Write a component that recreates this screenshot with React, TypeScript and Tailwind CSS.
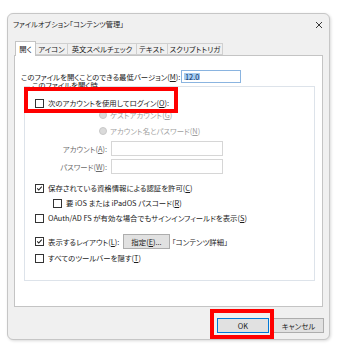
import type { ReactNode } from "react";

// File options dialog (Windows style): tab strip, "open" tab with a login group box,
// and two red call-out frames drawn over the screenshot.

function Check({ checked }: { checked?: boolean }) {
  return (
    <span className="flex h-[9px] w-[9px] shrink-0 items-center justify-center border border-[#333] bg-white">
      {checked && (
        <svg viewBox="0 0 9 9" className="h-[9px] w-[9px]">
          <path d="M1.6 4.4 L3.5 6.4 L7.4 2.2" fill="none" stroke="#1a1a1a" strokeWidth="1.3" />
        </svg>
      )}
    </span>
  );
}

function Radio() {
  return <span className="h-[8px] w-[8px] shrink-0 rounded-full border border-[#c8c8c8] bg-[#dadada]" />;
}

function Key({ k }: { k: string }) {
  return (
    <>
      (<u>{k}</u>)
    </>
  );
}

function CheckRow({ checked, indent, children, className }: { checked?: boolean; indent?: boolean; children: ReactNode; className: string }) {
  return (
    <div className={`flex h-[12px] items-center gap-[4px] ${indent ? "pl-[28px]" : "pl-[10px]"} ${className}`}>
      <Check checked={checked} />
      <span className="whitespace-nowrap">{children}</span>
    </div>
  );
}

const TABS = [
  { label: "開く", w: "w-[21px]" },
  { label: "アイコン", w: "w-[32px]" },
  { label: "英文スペルチェック", w: "w-[69px]" },
  { label: "テキスト", w: "w-[31px]" },
  { label: "スクリプトトリガ", w: "w-[55px]" },
];

export default function App() {
  return (
    <div className="relative h-[345px] w-[338px] overflow-hidden bg-white pl-[7px] pt-[13px] font-['Noto_Sans_CJK_JP',sans-serif] text-[7.4px] leading-none text-[#1a1a1a] [font-feature-settings:'palt']">
      <div className="flex h-[327px] w-[323px] flex-col rounded-[6px] border border-[#c6c6c6] bg-[#f0f0f0] shadow-[1px_1px_3px_rgba(0,0,0,0.15)]">
        <div className="flex h-[21px] items-center justify-between pl-[5px] pr-[7px]">
          <span className="text-[7.2px]">ファイルオプション「コンテンツ管理」</span>
          <svg viewBox="0 0 6 6" className="h-[6px] w-[6px]">
            <path d="M0 0 L6 6 M6 0 L0 6" stroke="#222" strokeWidth="0.9" />
          </svg>
        </div>

        <div className="mt-[6px] flex h-[14px] items-end pl-[7px]">
          {TABS.map((tab, i) =>
            i === 0 ? (
              <div
                key={tab.label}
                className={`relative z-10 -mb-px flex h-[15px] ${tab.w} items-center justify-center border border-b-0 border-[#c4c4c4] bg-white pb-[1px]`}
              >
                {tab.label}
              </div>
            ) : (
              <div
                key={tab.label}
                className={`flex h-[12px] ${tab.w} items-center justify-center whitespace-nowrap border-y border-r border-[#d0d0d0] bg-[#f0f0f0]`}
              >
                {tab.label}
              </div>
            ),
          )}
        </div>

        <div className="ml-[6px] flex h-[252px] w-[309px] flex-col border border-[#c4c4c4] bg-white">
          <div className="mt-[14px] flex h-[13px] items-center pl-[6px]">
            <span className="w-[160px] whitespace-nowrap">
              このファイルを開くことのできる最低バージョン<Key k="M" />:
            </span>
            <span className="flex h-[13px] w-[60px] items-center border border-[#8ab4e0] bg-white pl-[2px]">
              <span className="bg-[#a3cbf1] px-[1px] text-[#0b2c5c]">12.0</span>
            </span>
          </div>

          <div className="relative ml-[9px] mt-[3px] flex h-[195px] w-[291px] flex-col border border-[#dde3ea]">
            <span className="absolute left-[5px] top-[-6px] bg-white px-[2px]">このファイルを開く時</span>

            <CheckRow className="mt-[10px]">
              次のアカウントを使用してログイン<Key k="O" />:
            </CheckRow>

            <div className="ml-[74px] flex h-[12px] items-center gap-[3px] text-[#a0a0a0]">
              <Radio />
              <span>
                ゲストアカウント<Key k="G" />
              </span>
            </div>
            <div className="ml-[74px] mt-[4px] flex h-[12px] items-center gap-[3px] text-[#a0a0a0]">
              <Radio />
              <span>
                アカウント名とパスワード<Key k="N" />
              </span>
            </div>

            <div className="mt-[4px] flex h-[15px] items-center text-[#6b6b6b]">
              <span className="w-[82px] text-right">
                アカウント<Key k="A" />:
              </span>
              <span className="ml-[4px] h-[15px] w-[112px] border border-[#d6d6d6] bg-white" />
            </div>
            <div className="mt-[3px] flex h-[15px] items-center text-[#6b6b6b]">
              <span className="w-[82px] text-right">
                パスワード<Key k="W" />:
              </span>
              <span className="ml-[4px] h-[15px] w-[112px] border border-[#d6d6d6] bg-white" />
            </div>

            <CheckRow checked className="mt-[8px]">
              保存されている資格情報による認証を許可<Key k="C" />
            </CheckRow>
            <CheckRow indent className="mt-[3px]">
              要 iOS または iPadOS パスコード<Key k="R" />
            </CheckRow>
            <CheckRow className="mt-[3px]">
              OAuth/AD FS が有効な場合でもサインインフィールドを表示<Key k="S" />
            </CheckRow>

            <div className="mt-[10px] flex h-[15px] items-center gap-[4px] pl-[10px]">
              <Check checked />
              <span className="w-[71px] whitespace-nowrap">
                表示するレイアウト<Key k="L" />:
              </span>
              <span className="flex h-[15px] w-[47px] items-center justify-center border border-[#adadad] bg-[#e1e1e1]">
                指定<Key k="E" />...
              </span>
              <span className="ml-[-2px] whitespace-nowrap">「コンテンツ詳細」</span>
            </div>

            <CheckRow className="mt-[3px]">
              すべてのツールバーを隠す<Key k="T" />
            </CheckRow>
          </div>
        </div>

        <div className="mt-[11px] flex justify-end gap-[4px] pr-[5px]">
          <span className="flex h-[15px] w-[52px] items-center justify-center border border-[#0078d7] bg-[#e1e1e1]">OK</span>
          <span className="flex h-[15px] w-[51px] items-center justify-center border border-[#adadad] bg-[#e1e1e1]">キャンセル</span>
        </div>
      </div>

      <div className="absolute left-[24px] top-[87px] h-[26px] w-[154px] border-[4px] border-[#ff0000]" />
      <div className="absolute left-[210px] top-[309px] h-[30px] w-[64px] border-[4px] border-[#ff0000]" />
    </div>
  );
}
